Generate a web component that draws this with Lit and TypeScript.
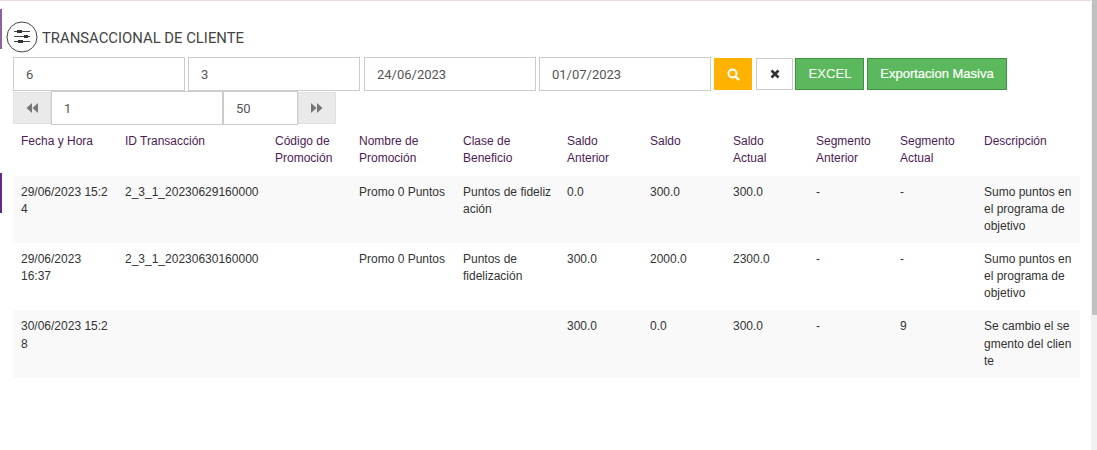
import { LitElement, html, css } from "lit";
import { customElement } from "lit/decorators.js";

const cols = [104, 150, 84, 104, 104, 83, 83, 83, 84, 84, 104];
const head = ["Fecha y Hora", "ID Transacción", "Código de Promoción", "Nombre de Promoción", "Clase de Beneficio", "Saldo Anterior", "Saldo", "Saldo\nActual", "Segmento Anterior", "Segmento Actual", "Descripción"];
const rows = [
  ["29/06/2023 15:2\n4", "2_3_1_20230629160000", "", "Promo 0 Puntos", "Puntos de fideliz\nación", "0.0", "300.0", "300.0", "-", "-", "Sumo puntos en\nel programa de\nobjetivo"],
  ["29/06/2023\n16:37", "2_3_1_20230630160000", "", "Promo 0 Puntos", "Puntos de\nfidelización", "300.0", "2000.0", "2300.0", "-", "-", "Sumo puntos en\nel programa de\nobjetivo"],
  ["30/06/2023 15:2\n8", "", "", "", "", "300.0", "0.0", "300.0", "-", "9", "Se cambio el se\ngmento del clien\nte"],
];

@customElement("app-root")
export class AppRoot extends LitElement {
  static styles = css`
    :host { display: block; height: 450px; position: relative; overflow: hidden; background: #fff; font-family: "Liberation Sans", Arial, sans-serif; color: #333; }
    .top { height: 1px; background: #f0d8dc; }
    .page { padding: 20px 0 0 6px; }
    .title { display: flex; align-items: center; gap: 4px; height: 32px; color: #444; font: 14.85px Roboto, sans-serif; margin-bottom: 4px; }
    .title span { padding-top: 2px; }
    .ring { display: block; }
    .row { display: flex; margin-left: 7px; }
    .f1 { height: 34px; gap: 3px; align-items: center; }
    .f2 { height: 34px; align-items: center; }
    .inp { box-sizing: border-box; height: 34px; border: 1px solid #ccc; background: #fff; padding: 0 12px; font: 13px Roboto, sans-serif; color: #555; display: flex; align-items: center; }
    .w172 { width: 172px; }
    .shift { margin-left: 1px; }
    .w75 { width: 75px; }
    .btn { box-sizing: border-box; height: 32px; display: flex; align-items: center; justify-content: center; font: 13px "Liberation Sans", Arial, sans-serif; }
    .search { width: 38px; background: #ffb300; }
    .clear { width: 37px; background: #fff; border: 1px solid #ccc; margin-left: 1px; }
    .green { background: #5cb85c; border: 1px solid #3f9142; color: #fff; padding-bottom: 2px; }
    .excel { width: 69px; margin-left: -1px; font-size: 13.2px; padding-left: 1px; }
    .masiva { width: 140px; font-size: 13px; -webkit-text-stroke: 0.2px #fff; }
    .page-btn { box-sizing: border-box; width: 38px; height: 32px; background: #eaeaea; border: 1px solid #e2e2e2; display: flex; align-items: center; justify-content: center; }
    table { border-collapse: collapse; table-layout: fixed; width: 1067px; margin: 4.6px 0 0 7px; font-size: 12px; line-height: 1.42857; }
    th, td { vertical-align: top; text-align: left; font-weight: 400; }
    th { color: #4d1b57; padding: 3px 8px 8.7px; white-space: pre-line; }
    td { padding: 8px; color: #333; white-space: pre; }
    tr.odd td { background: #f9f9f9; }
    .mark1, .mark2 { position: absolute; left: 0; width: 2px; height: 40px; }
    .mark1 { top: 9px; background: #8e62a8; }
    .mark2 { top: 173px; background: #5f2c8c; }
    .sb { position: absolute; top: 0; right: 0; bottom: 0; width: 6px; background: #f1f1f1; }
    .thumb { height: 315px; margin-left: 1px; background: #c1c1c1; }
  `;

  render() {
    return html`
      <div class="top"></div>
      <div class="mark1"></div>
      <div class="mark2"></div>
      <div class="page">
        <div class="title">
          <svg class="ring" width="32" height="32" viewBox="0 0 32 32" fill="none" stroke="#444">
            <circle cx="16" cy="16" r="15" stroke-width="1"/>
            <path d="M8 10.5H24M8 15.5H24M8 20.5H24" stroke-width="1"/>
            <rect x="11" y="9" width="5" height="3" fill="#333" stroke="none"/>
            <rect x="18" y="14" width="4" height="3" fill="#333" stroke="none"/>
            <rect x="12" y="19" width="5" height="3" fill="#333" stroke="none"/>
          </svg>
          <span>TRANSACCIONAL DE CLIENTE</span>
        </div>
        <div class="row f1">
          <div class="inp w172">6</div>
          <div class="inp w172">3</div>
          <div class="inp w172 shift">24/06/2023</div>
          <div class="inp w172">01/07/2023</div>
          <div class="btn search">
            <svg width="13" height="13" viewBox="0 0 13 13" fill="none" stroke="#fff" stroke-width="2"><circle cx="5.5" cy="5.5" r="4"/><path d="M8.5 8.5L12 12" stroke-width="2.4"/></svg>
          </div>
          <div class="btn clear">
            <svg width="10" height="10" viewBox="0 0 10 10" fill="none" stroke="#333" stroke-width="2.6"><path d="M1.5 1.5L8.5 8.5M8.5 1.5L1.5 8.5"/></svg>
          </div>
          <div class="btn green excel">EXCEL</div>
          <div class="btn green masiva">Exportacion Masiva</div>
        </div>
        <div class="row f2">
          <div class="page-btn"><svg width="12" height="10" viewBox="0 0 12 10" fill="#777"><path d="M6 0V10L0.5 5ZM12 0V10L6.5 5Z"/></svg></div>
          <div class="inp w172">1</div>
          <div class="inp w75">50</div>
          <div class="page-btn"><svg width="12" height="10" viewBox="0 0 12 10" fill="#777"><path d="M0 0V10L5.5 5ZM6 0V10L11.5 5Z"/></svg></div>
        </div>
        <table>
          <colgroup>${cols.map((w) => html`<col style="width:${w}px" />`)}</colgroup>
          <thead><tr>${head.map((h) => html`<th>${h}</th>`)}</tr></thead>
          <tbody>
            ${rows.map((r, i) => html`<tr class=${i % 2 === 0 ? "odd" : ""}>${r.map((c) => html`<td>${c}</td>`)}</tr>`)}
          </tbody>
        </table>
      </div>
      <div class="sb"><div class="thumb"></div></div>
    `;
  }
}
